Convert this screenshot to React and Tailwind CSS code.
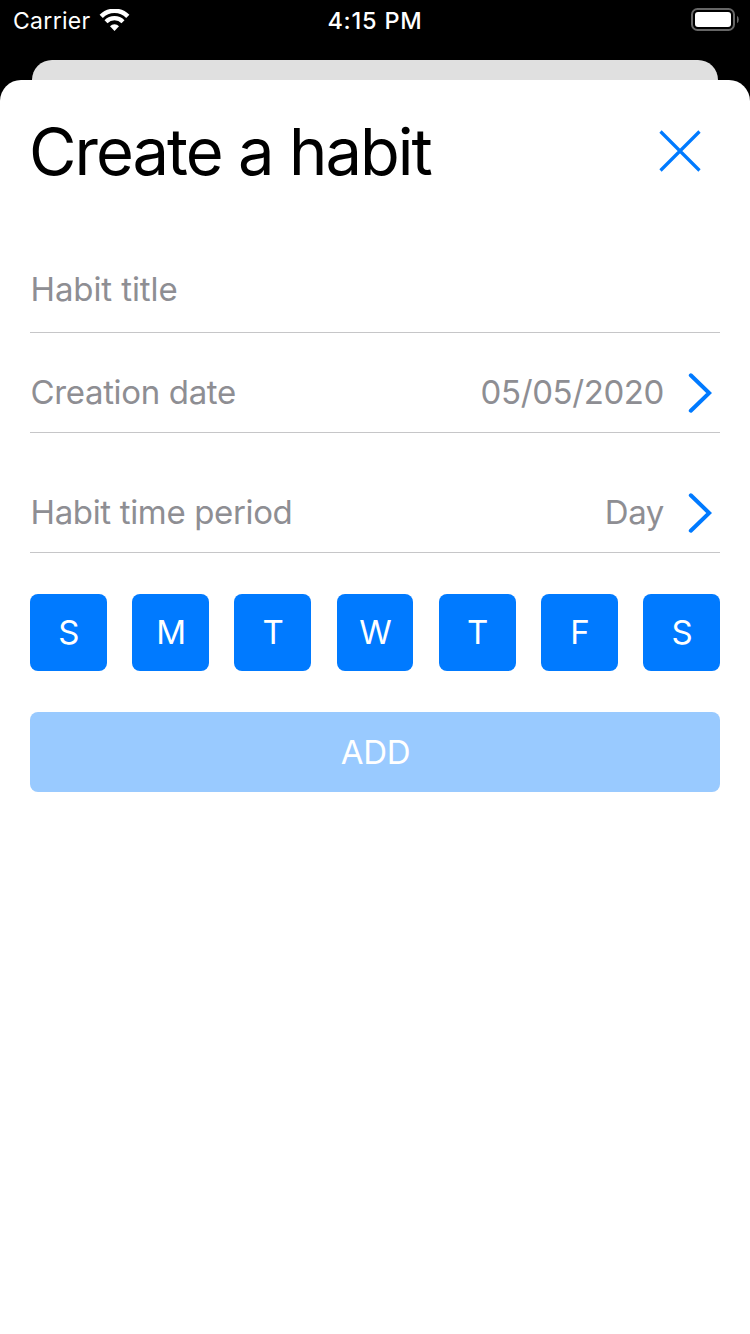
import React from "react";

const days = ["S", "M", "T", "W", "T", "F", "S"];

function WifiIcon() {
  return (
    <svg className="mt-[9px] ml-[8px] h-[23px] w-[31px]" viewBox="0 0 31 23" fill="none">
      <path d="M2.2 7.4A18.6 18.6 0 0 1 28.8 7.4" stroke="#fff" strokeWidth="4.5" />
      <path d="M7 12.7A12 12 0 0 1 24 12.7" stroke="#fff" strokeWidth="4.2" />
      <path d="M11 17.3A6.2 6.2 0 0 1 20 17.3L15.5 21.9Z" fill="#fff" />
    </svg>
  );
}

function BatteryIcon() {
  return (
    <svg className="mt-[8px] h-[23px] w-[49px]" viewBox="0 0 49 23" fill="none">
      <rect x="2" y="1" width="42" height="21" rx="5.5" stroke="#666" strokeWidth="2" />
      <rect x="5" y="4" width="36" height="15" rx="3" fill="#fff" />
      <path d="M47 7.8Q48.8 8.8 48.8 11.5Q48.8 14.2 47 15.2Z" fill="#666" />
    </svg>
  );
}

function Chevron() {
  return (
    <svg className="mt-[2px] h-10 w-[24px]" viewBox="0 0 24 40" fill="none">
      <path d="M2.8 2.3L21.2 20L2.8 37.7" stroke="#007aff" strokeWidth="4" strokeLinecap="round" />
    </svg>
  );
}

function PickerRow({ label, value }) {
  return (
    <div className="flex h-[81px] items-center border-b border-[#c6c6c8] pr-[8px] pl-[0.5px]">
      <span className="grow tracking-[-0.35px]">{label}</span>
      <span className="mr-[24px] tracking-[-0.4px]">{value}</span>
      <Chevron />
    </div>
  );
}

export default function App() {
  return (
    <div className="flex h-[1334px] w-[750px] flex-col overflow-hidden bg-black font-['Inter',sans-serif]">
      <header className="grid h-[60px] grid-cols-3 text-[23px] text-white">
        <div className="flex pl-[13px]">
          <span className="leading-[42px] tracking-[0.3px]">Carrier</span>
          <WifiIcon />
        </div>
        <div className="text-center text-[23.5px] leading-[42px] font-medium tracking-[0.8px]">4:15 PM</div>
        <div className="flex justify-end pr-[11px]">
          <BatteryIcon />
        </div>
      </header>
      <div className="mr-[32px] ml-[32px] h-5 rounded-t-[20px] bg-[#e0e0e0]" />
      <main className="flex grow flex-col rounded-t-[21px] bg-white px-[30px] text-[33px] leading-[40px] text-[#8e8e93]">
        <div className="flex h-[142px] items-center justify-between pr-[19px] text-black">
          <h1 className="-ml-px pt-[2px] text-[65px] leading-[80px] tracking-[-1.95px]">Create a habit</h1>
          <svg className="h-[42px] w-[42px]" viewBox="0 0 42 42" fill="none">
            <path d="M1.5 1.5L40.5 40.5M40.5 1.5L1.5 40.5" stroke="#007aff" strokeWidth="3.2" />
          </svg>
        </div>
        <div className="flex h-[111px] items-end border-b border-[#c6c6c8] pb-[23px] pl-[0.5px] tracking-[-0.1px]">Habit title</div>
        <div className="mt-[19px]">
          <PickerRow label="Creation date" value="05/05/2020" />
        </div>
        <div className="mt-[39px]">
          <PickerRow label="Habit time period" value="Day" />
        </div>
        <div className="mt-[41px] flex justify-between text-white">
          {days.map((d, i) => (
            <button key={i} className="h-[77px] w-[76.67px] rounded-[8px] bg-[#007aff] pb-[2px] pl-[1px]">
              {d}
            </button>
          ))}
        </div>
        <button className="mt-[41px] h-20 rounded-[8px] bg-[#99caff] pl-[1px] tracking-[-0.3px] text-white">ADD</button>
      </main>
    </div>
  );
}
